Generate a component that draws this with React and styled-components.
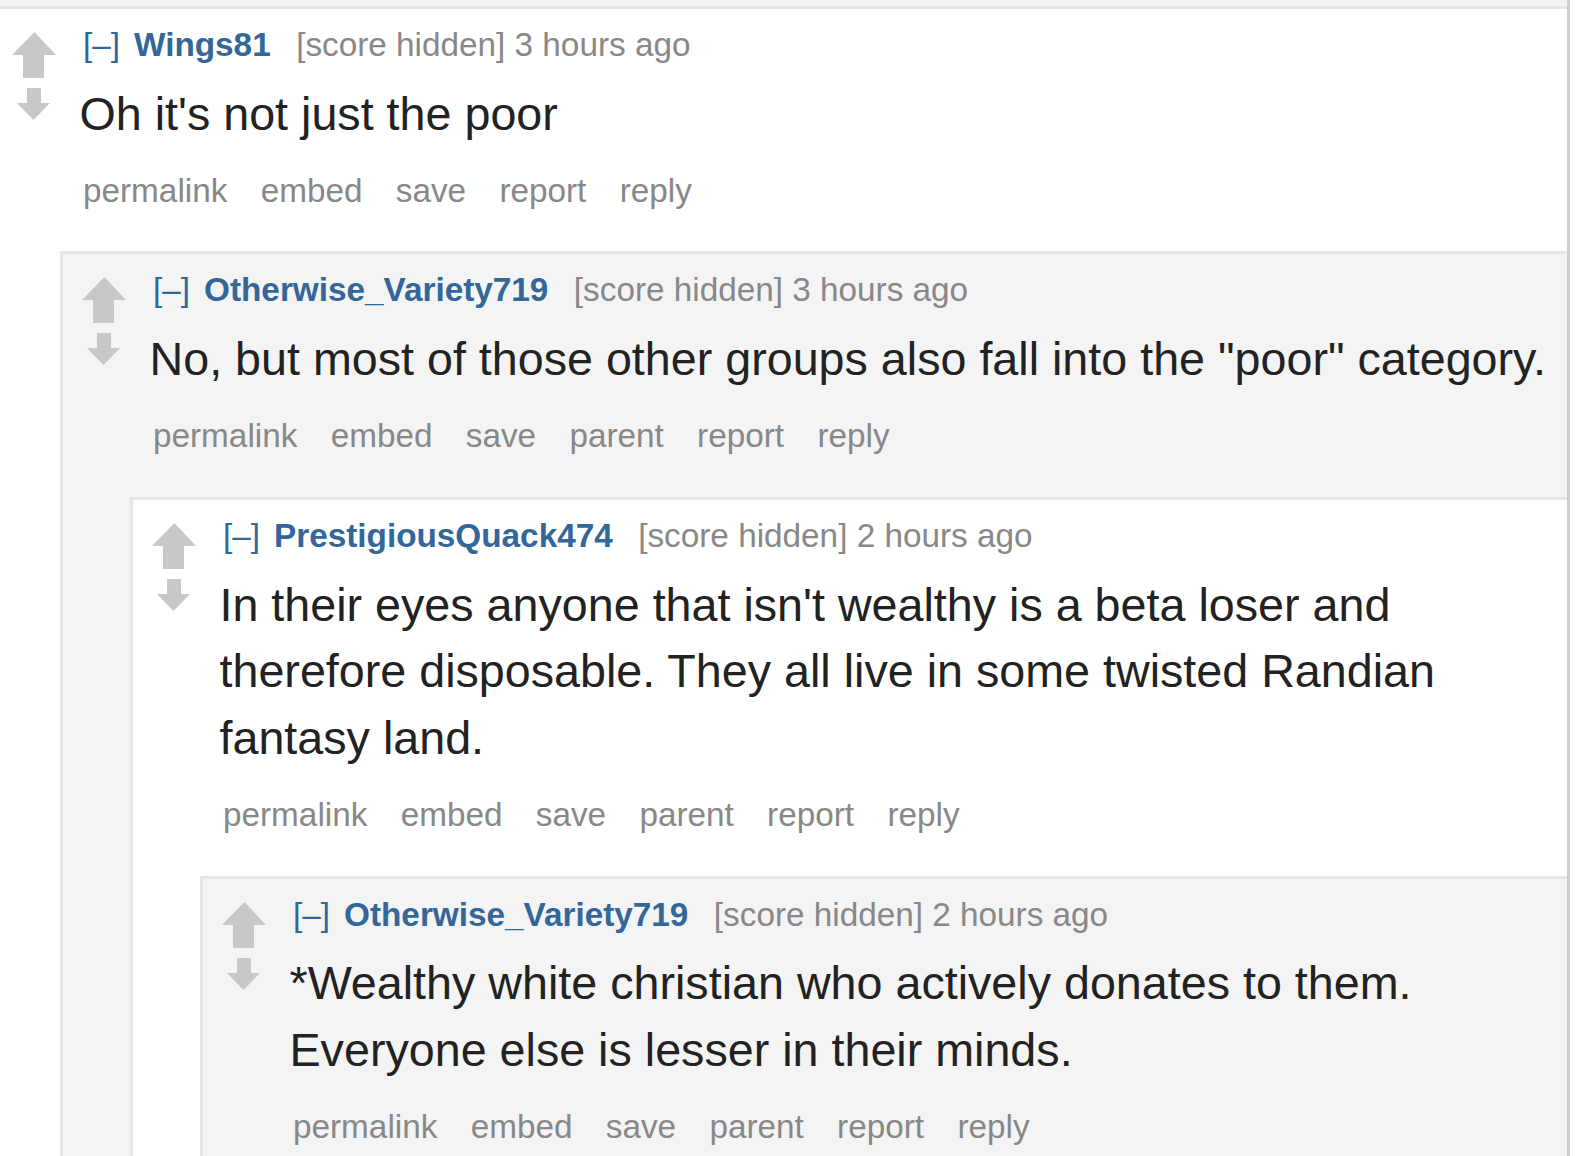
import React from 'react';
import styled, { createGlobalStyle } from 'styled-components';

const GlobalStyle = createGlobalStyle`
  html, body {
    margin: 0;
    padding: 0;
    background: #ffffff;
  }
  body {
    font-family: "Liberation Sans", Arial, sans-serif;
  }
`

const Page = styled.div`
  width: 1567px;
  min-height: 1156px;
  border-right: 3px solid #cdcdcd;
  overflow: hidden;
`

const TopStrip = styled.div`
  height: 6px;
  background: #f4f4f4;
`

const Box = styled.div`
  background: ${p => (p.$gray ? '#f4f4f4' : '#ffffff')};
  border: 3px solid #e6e6e6;
  border-right: none;
  margin-left: ${p => (p.$root ? '-10px' : '0')};
  padding: 16px 0 24px 17px;
`

const Row = styled.div`
  display: flex;
  align-items: flex-start;
`

const Votes = styled.div`
  width: 47px;
  flex-shrink: 0;
  margin-top: 7px;
  display: flex;
  flex-direction: column;
  filter: blur(0.6px);
`

const Down = styled.svg`
  margin-left: 7px;
  margin-top: 10px;
`

const Entry = styled.div`
  flex: 1;
  margin-left: 22px;
  padding-right: 10px;
  min-width: 0;
`

const Tagline = styled.div`
  display: flex;
  align-items: baseline;
  padding-left: 4px;
  font-size: 33.3px;
  line-height: 40px;
  white-space: nowrap;
`

const Expand = styled.span`
  color: #336699;
  margin-right: 14px;
`

const Author = styled.span`
  color: #336699;
  font-weight: bold;
  margin-right: 25.5px;
`

const Meta = styled.span`
  color: #888888;
`

const Body = styled.div`
  margin-top: 15.7px;
  padding-left: 0.5px;
  font-size: 46.67px;
  line-height: 66.67px;
  color: #222222;
`

const Buttons = styled.ul`
  list-style: none;
  margin: 23.6px 0 0 0;
  padding: 0 0 0 4px;
  display: flex;
  gap: 33.3px;
  font-size: 33.3px;
  line-height: 40px;
  color: #888888;
`

const Children = styled.div`
  margin-top: 40.5px;
  margin-left: 50px;
`

const UpArrow = () => (
  <svg width="47" height="46" viewBox="0 0 47 46">
    <polygon points="24.5,0 46,23 34,23 34,46 13,46 13,23 2,23" fill="#c8c8c8" />
  </svg>
)

const DownArrow = () => (
  <Down width="33" height="32" viewBox="0 0 33 32">
    <polygon points="10,0 24,0 24,15 33,15 16.5,32 0,15 10,15" fill="#c8c8c8" />
  </Down>
)

const thread = {
  author: 'Wings81',
  time: '3 hours ago',
  body: "Oh it's not just the poor",
  buttons: ['permalink', 'embed', 'save', 'report', 'reply'],
  children: [
    {
      author: 'Otherwise_Variety719',
      time: '3 hours ago',
      body: 'No, but most of those other groups also fall into the "poor" category.',
      buttons: ['permalink', 'embed', 'save', 'parent', 'report', 'reply'],
      children: [
        {
          author: 'PrestigiousQuack474',
          time: '2 hours ago',
          body: "In their eyes anyone that isn't wealthy is a beta loser and therefore disposable. They all live in some twisted Randian fantasy land.",
          buttons: ['permalink', 'embed', 'save', 'parent', 'report', 'reply'],
          children: [
            {
              author: 'Otherwise_Variety719',
              time: '2 hours ago',
              body: '*Wealthy white christian who actively donates to them. Everyone else is lesser in their minds.',
              buttons: ['permalink', 'embed', 'save', 'parent', 'report', 'reply'],
              children: [],
            },
          ],
        },
      ],
    },
  ],
}

function Comment({ c, depth }) {
  return (
    <Box $gray={depth % 2 === 1} $root={depth === 0}>
      <Row>
        <Votes>
          <UpArrow />
          <DownArrow />
        </Votes>
        <Entry>
          <Tagline>
            <Expand>[–]</Expand>
            <Author>{c.author}</Author>
            <Meta>[score hidden] {c.time}</Meta>
          </Tagline>
          <Body>{c.body}</Body>
          <Buttons>
            {c.buttons.map(b => (
              <li key={b}>{b}</li>
            ))}
          </Buttons>
        </Entry>
      </Row>
      {c.children.length > 0 && (
        <Children>
          {c.children.map((ch, i) => (
            <Comment key={i} c={ch} depth={depth + 1} />
          ))}
        </Children>
      )}
    </Box>
  )
}

export default function App() {
  return (
    <>
      <GlobalStyle />
      <Page>
        <TopStrip />
        <Comment c={thread} depth={0} />
      </Page>
    </>
  )
}
